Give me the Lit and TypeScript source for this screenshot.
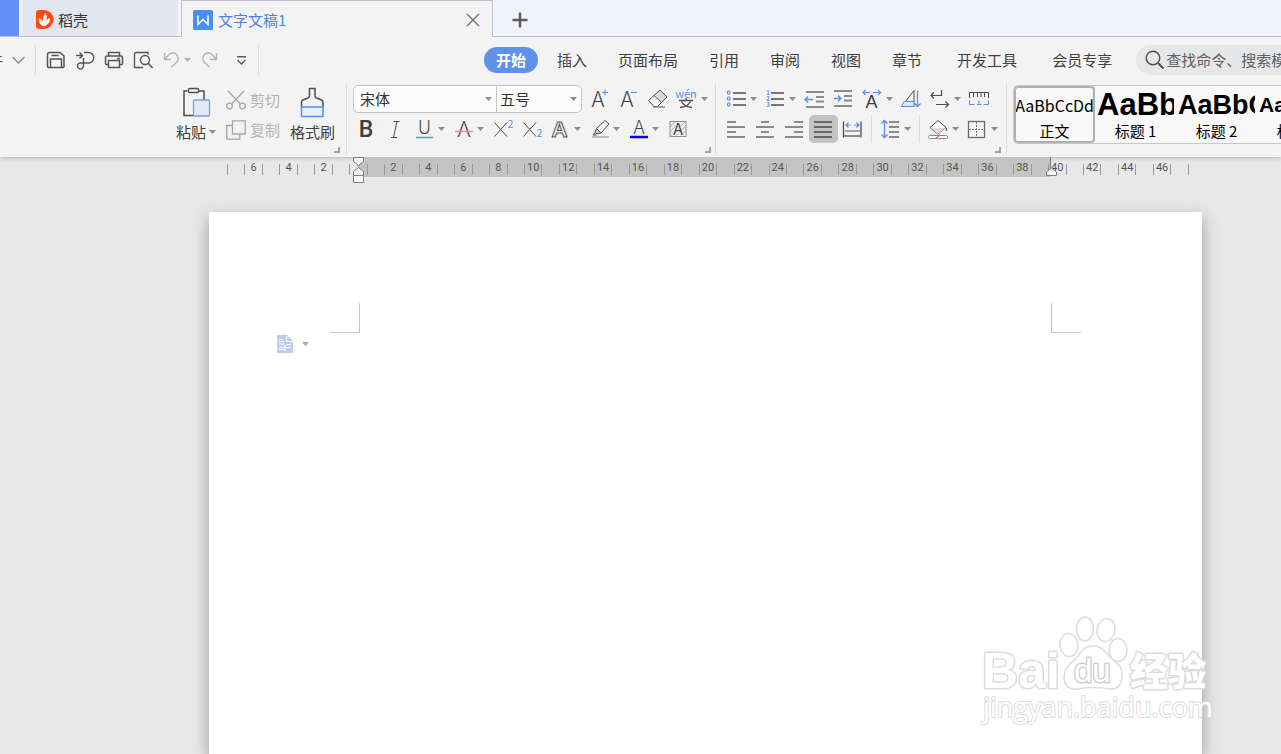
import { LitElement, html, svg, css, nothing, TemplateResult, SVGTemplateResult } from "lit";
import { customElement, state } from "lit/decorators.js";

const GREY = "#8a8a8a";
const DARK = "#4d4d4d";
const BLUE = "#5b8fe6";

const letter = (ch: string, x: number, y: number, size: number, extra = "") =>
  svg`<text class="glyph ${extra}" x=${x} y=${y} font-size=${size} text-anchor="middle">${ch}</text>`;

const hline = (x1: number, x2: number, y: number, color = GREY, w = 2) =>
  svg`<path d="M${x1} ${y}H${x2}" stroke=${color} stroke-width=${w} fill="none"/>`;

const ICONS: Record<string, SVGTemplateResult> = {
  grow: svg`${letter("A", 8, 19, 22)}<path d="M12 4.5h6M15 1.5v6" stroke=${BLUE} fill="none"/>`,
  shrink: svg`${letter("A", 8, 19, 22)}<path d="M12 4.5h6" stroke=${BLUE} fill="none"/>`,
  eraser: svg`<path d="M6.5 6.5L12 2l7 7-5.500 5.500z" fill="#dadada"/><path d="M12 2l7 7-9.500 9.500H6L.5 12.500z M6 7.500l7.500 7" fill="none" stroke=${DARK}/><path d="M5 19h12" stroke=${GREY} stroke-width="1.500"/>`,
  pinyin: svg`<text class="glyph blue" x="9" y="10" font-size="11" text-anchor="middle">wén</text><path d="M2 12.500h14M9 10v2.500M4.500 13.500c2 4 5 5.500 10.500 6M13.500 13.500c-2 4-5 5.500-10.500 6" stroke=${DARK} stroke-width="1.300" fill="none"/>`,
  bold: letter("B", 10, 19, 23, "strong"),
  italic: svg`<path d="M8.500 3.500h6M6 19.500h6M12 3.500L8.500 19.500" stroke=${DARK} fill="none"/>`,
  underline: svg`${letter("U", 10.5, 16, 19)}${hline(2, 19, 19.5, BLUE, 1.5)}`,
  strike: svg`${letter("A", 11, 19, 22)}${hline(2, 20, 13.5, "#e58c8c", 1.5)}`,
  sup: svg`<path d="M2.500 4.500L15 18.500M15 4.500L2.500 18.500" stroke=${DARK} fill="none"/><text class="glyph blue" x="18.500" y="10" font-size="10" text-anchor="middle">2</text>`,
  sub: svg`<path d="M2.500 4.500L15 18.500M15 4.500L2.500 18.500" stroke=${DARK} fill="none"/><text class="glyph blue" x="18.500" y="19" font-size="10" text-anchor="middle">2</text>`,
  effect: svg`<text x="11" y="19" class="outline-shade" font-size="22" text-anchor="middle">A</text><text x="9.500" y="19" class="outline" font-size="22" text-anchor="middle">A</text>`,
  highlight: svg`<path d="M7.500 10.500L16 2.500l4 3.500-8 9z" fill="none" stroke=${DARK}/><path d="M7.500 10.500l-1.500 4 2 1.500 4-1z M6 14.500L4 17h3.500" fill="#cfcfcf" stroke=${DARK}/>${hline(3, 20, 19, "#bcbcbc")}`,
  color: svg`${letter("A", 11, 16, 19)}${hline(2, 20, 19, "#0000ff", 2.5)}`,
  shade: svg`<rect x="3" y="3.500" width="16" height="15" fill="#f3f3f3" stroke="#909090"/><path d="M3 9l5-5.500M3 14l10-10.500M3 18.500L18 4M8 18.500L19 8M13 18.500l6-6" stroke="#a6a6a6"/><text class="glyph halo" x="11" y="17" font-size="16" text-anchor="middle">A</text>`,
  bullets: svg`${[3, 9, 15].map((y) => svg`<rect x="1.500" y=${y} width="2.500" height="3" rx="1" fill="none" stroke=${BLUE} stroke-width="1.200"/>${hline(7, 20, y + 2, DARK, 1.5)}`)}`,
  numbers: svg`${[1, 2, 3].map((n) => svg`<text class="glyph blue tiny" x="3" y=${n * 6 + 1} font-size="6" text-anchor="middle">${n}</text>${hline(6, 19, n * 6 - 1, DARK, 1.5)}`)}`,
  outdent: svg`${hline(2, 20, 4)}${hline(12, 20, 9)}${hline(12, 20, 13.5)}${hline(2, 20, 19)}<path d="M1 11.500h8M4 8.500l-3 3 3 3" stroke=${BLUE} stroke-width="1.300" fill="none"/>`,
  indent: svg`${hline(1, 19, 3)}${hline(11, 19, 8)}${hline(11, 19, 12.5)}${hline(1, 19, 18)}<path d="M1 10.500h7M5 7.500l3 3-3 3" stroke=${BLUE} stroke-width="1.300" fill="none"/>`,
  scale: svg`${letter("A", 9.5, 20, 18, "broad")}<path d="M1 4.500h7M3.500 2L1 4.500 3.500 7M11 4.500h7.500M16 2l2.500 2.500L16 7" stroke=${BLUE} stroke-width="1.200" fill="none"/>`,
  sort: svg`<path d="M.5 18.500h12.500V2.500z" fill="none" stroke=${DARK}/><path d="M3 13.500h10v5H.5z" fill="#dfe8f7" stroke=${BLUE}/><path d="M16.500 2.500v16M13.500 15.500l3 3 3-3" stroke=${BLUE} stroke-width="1.300" fill="none"/>`,
  wrap: svg`<path d="M11.500 2v5.500H1M4 4.500l-3 3 3 3M6 16.500h12.500M15.500 13.500l3 3-3 3" stroke=${DARK} stroke-width="1.200" fill="none"/>`,
  tabs: svg`<path d="M.5 10V4.500h19V10M4.500 5v4M8.500 5v4M12 5v4M15.500 5v4" stroke=${DARK} fill="none"/><path d="M.5 12.500v4h5M8 16.500h4.500M10 12.500v4M19.500 12.500v4h-5" stroke=${BLUE} fill="none"/>`,
  left: svg`${hline(1, 10, 4)}${hline(1, 19, 9)}${hline(1, 10, 14)}${hline(1, 19, 19)}`,
  center: svg`${hline(6, 14, 4)}${hline(1, 19, 9)}${hline(6, 14, 14)}${hline(1, 19, 19)}`,
  right: svg`${hline(10, 19, 4)}${hline(1, 19, 9)}${hline(10, 19, 14)}${hline(1, 19, 19)}`,
  justify: svg`${hline(1, 19, 4, "#666")}${hline(1, 19, 9, "#666")}${hline(1, 19, 14, "#666")}${hline(1, 19, 19, "#666")}`,
  spread: svg`<path d="M1.500 3.500v16M19 3.500v16" stroke=${DARK} stroke-width="1.300"/>${hline(3, 18, 13, GREY, 1.5)}${hline(2, 19, 18, GREY, 2)}<path d="M4 7h5M6.500 4.500L4 7l2.500 2.500M12 7h5M14.500 4.500L17 7l-2.500 2.500" stroke=${BLUE} stroke-width="1.200" fill="none"/>`,
  spacing: svg`${hline(9, 19, 4)}${hline(9, 19, 9)}${hline(9, 19, 14)}${hline(9, 19, 19)}<path d="M4.500 3v16M1.500 5.500l3-3 3 3M1.500 16.500l3 3 3-3" stroke=${BLUE} stroke-width="1.300" fill="none"/>`,
  fill: svg`<path d="M2 9.500L10 2.500l8 7-8.500 6.500z" fill="#fff" stroke=${DARK}/><path d="M3 10h14.500l-8 6z" fill="#dcdcdc"/><path d="M18.500 10v3" stroke=${DARK}/><rect x=".5" y="17.500" width="19" height="3" rx="1" fill="#fff" stroke=${GREY}/><path d="M8 20.500l4-4" stroke="#e06a6a" stroke-width="1.300"/>`,
  borders: svg`<rect x="1.500" y="3.500" width="16" height="16" fill="none" stroke="#6a6a6a" stroke-width="1.300"/><path d="M9.500 4v15M2 11.500h15" stroke="#777" stroke-dasharray="2 1"/>`,
};

interface Tool {
  icon: string;
  label: string;
  menu?: boolean;
  sep?: boolean;
  on?: boolean;
}

const FONT_ROW1: Tool[] = [
  { icon: "grow", label: "增大字号" },
  { icon: "shrink", label: "减小字号" },
  { icon: "eraser", label: "清除格式" },
  { icon: "pinyin", label: "拼音指南", menu: true },
];
const FONT_ROW2: Tool[] = [
  { icon: "bold", label: "加粗" },
  { icon: "italic", label: "倾斜" },
  { icon: "underline", label: "下划线", menu: true },
  { icon: "strike", label: "删除线", menu: true },
  { icon: "sup", label: "上标" },
  { icon: "sub", label: "下标" },
  { icon: "effect", label: "文字效果", menu: true },
  { icon: "highlight", label: "突出显示", menu: true },
  { icon: "color", label: "字体颜色", menu: true },
  { icon: "shade", label: "字符底纹" },
];
const PARA_ROW1: Tool[] = [
  { icon: "bullets", label: "项目符号", menu: true },
  { icon: "numbers", label: "编号", menu: true },
  { icon: "outdent", label: "减少缩进量" },
  { icon: "indent", label: "增加缩进量" },
  { icon: "scale", label: "中文版式", menu: true },
  { icon: "sort", label: "排序" },
  { icon: "wrap", label: "显示编辑标记", menu: true },
  { icon: "tabs", label: "制表位" },
];
const PARA_ROW2: Tool[] = [
  { icon: "left", label: "左对齐" },
  { icon: "center", label: "居中对齐" },
  { icon: "right", label: "右对齐" },
  { icon: "justify", label: "两端对齐", on: true },
  { icon: "spread", label: "分散对齐" },
  { icon: "spacing", label: "行距", menu: true, sep: true },
  { icon: "fill", label: "底纹颜色", menu: true, sep: true },
  { icon: "borders", label: "边框", menu: true },
];

const MENUS = ["开始", "插入", "页面布局", "引用", "审阅", "视图", "章节"];
const MENUS_WIDE = ["开发工具", "会员专享"];

const STYLES = [
  { sample: "AaBbCcDd", name: "正文", cls: "body" },
  { sample: "AaBb", name: "标题 1", cls: "h1" },
  { sample: "AaBbC", name: "标题 2", cls: "h2" },
  { sample: "AaBbCc", name: "标题 3", cls: "h3" },
];

const caret = html`<svg class="caret" width="7" height="4" viewBox="0 0 7 4" aria-hidden="true"><path d="M0 0h7L3.500 4z" fill="#8c8c8c"/></svg>`;

const picture = (w: number, h: number, body: SVGTemplateResult): TemplateResult =>
  html`<svg width=${w} height=${h} viewBox="0 0 ${w} ${h}" aria-hidden="true">${body}</svg>`;

const resets = css`
  * { box-sizing: border-box; }
  button {
    font: inherit; color: inherit; border: 0; padding: 0; margin: 0;
    background: none; display: flex; align-items: center; flex: none; cursor: default;
  }
  svg { display: block; flex: none; overflow: visible; }
`;

@customElement("tab-strip")
export class TabStrip extends LitElement {
  static styles = [resets, css`
    :host { display: flex; height: 37px; background: #f2f3f8; box-shadow: inset 0 -1px #b9c0d4; font-size: 15px; }
    .home { width: 19px; margin-right: 3px; height: 36px; background: #6390fb; }
    .tab { width: 156px; height: 36px; padding: 4px 0 0 14px; gap: 5px; background: #e2e6ef; color: #333; margin-right: 3px; }
    .active { display: flex; align-items: center; flex: none; width: 312px; padding: 2px 12px 0 11px; background: #f3f3f3; border: 1px solid #b9c0d4; border-bottom: 0; }
    .title { flex: 1; color: #4a83e4; gap: 5px; }
    .add { margin-left: 19px; padding-top: 2px; }
  `];
  render() {
    return html`
      <button class="home" aria-label="首页"></button>
      <button class="tab">${picture(17, 20, svg`
        <path d="M0 3a3 3 0 0 1 3-3h5a9.500 9.500 0 0 1 0 19H3a3 3 0 0 1-3-3z" fill="#ff4a12"/>
        <path d="M7.500 16.500C3.500 14.500 2.500 11 3 8c2.500 1 4.500 3 4.500 5.500C6.500 9 7 5.500 9.500 3c2 3 1.500 6 0 9.500 1-2.500 2.500-4 4.500-4.500 0 4-1.500 7-6.500 8.500z" fill="#fff"/>`)}稻壳</button>
      <div class="active">
        <button class="title">${picture(20, 20, svg`
          <rect width="20" height="20" rx="1.500" fill="#4a90f2"/>
          <path d="M5 5.500v9l5-5 5 5v-9" fill="none" stroke="#fff" stroke-width="1.500"/>`)}文字文稿1</button>
        <button aria-label="关闭">${picture(14, 14, svg`<path d="M1 1l12 12M13 1L1 13" stroke="#6b6b6b" stroke-width="1.300"/>`)}</button>
      </div>
      <button class="add" aria-label="新建">${picture(16, 16, svg`<path d="M8 .5v15M.5 8h15" stroke="#5c5c5c" stroke-width="2.500"/>`)}</button>
    `;
  }
}

@customElement("menu-row")
export class MenuRow extends LitElement {
  @state() private current = "开始";
  static styles = [resets, css`
    :host { display: flex; align-items: center; height: 46px; overflow: hidden; font-size: 15px; color: #404040; }
    .file { width: 3px; overflow: hidden; justify-content: flex-end; white-space: nowrap; }
    .fold { margin: 0 10px 0 9px; }
    .rule { flex: none; width: 1px; height: 30px; background: #dcdcdc; }
    .quick { display: flex; align-items: center; gap: 9px; margin: 0 11px 0 10px; }
    .history { display: flex; align-items: center; gap: 4px; margin-right: 1px; }
    .history .caret { opacity: 0.6; }
    .quick .more { margin: 0 0 0 8px; }
    nav { display: flex; align-items: center; gap: 7px; margin-left: 225px; }
    nav button { height: 26px; padding: 0 12px; border-radius: 13px; white-space: nowrap; }
    nav .wide { margin-left: 4px; }
    nav .current { background: #5e92e8; color: #fff; font-weight: 700; }
    .search { display: flex; align-items: center; flex: 1 0 240px; height: 30px; margin-left: 12px; padding-left: 9px; gap: 2px; border-radius: 15px 0 0 15px; background: #e6e7e9; }
    input { flex: 1; min-width: 0; border: 0; padding: 0; background: none; font: inherit; outline: 0; }
    input::placeholder { color: #606060; opacity: 1; }
  `];
  render() {
    const item = (name: string, wide = false) => html`<button
      class="${wide ? "wide" : ""} ${name === this.current ? "current" : ""}"
      @click=${() => (this.current = name)}>${name}</button>`;
    return html`
      <button class="file">文件</button>
      <button class="fold" aria-label="展开">${picture(13, 8, svg`<path d="M.5 1l6 6 6-6" fill="none" stroke="#8a8a8a" stroke-width="1.300"/>`)}</button>
      <span class="rule"></span>
      <div class="quick">
        <button aria-label="保存">${picture(20, 20, svg`<path d="M1.500 4.500a2 2 0 0 1 2-2H14l4 3.500v10.500a1 1 0 0 1-1 1H2.500a1 1 0 0 1-1-1z M4.500 17.500V9h11v8.500M5.500 5.500h7" fill="none" stroke="#555" stroke-width="1.500"/>`)}</button>
        <button aria-label="输出为PDF">${picture(20, 20, svg`<path d="M1 5.500h6M4.500 2.500l3 3-3 3M9 2.500h4.500a5 5 0 0 1 0 10.500H6a3 3 0 1 0 2.500 3V8" fill="none" stroke="#555" stroke-width="1.400"/>`)}</button>
        <button aria-label="打印">${picture(20, 20, svg`<path d="M4.500 6V2.500h11V6M4.500 14.500H2.500a1 1 0 0 1-1-1V7.500A1.500 1.500 0 0 1 3 6h14a1.500 1.500 0 0 1 1.500 1.500v6a1 1 0 0 1-1 1h-2M4.500 10.500h11v7h-11zM13 8.500h3" fill="none" stroke="#555" stroke-width="1.500"/>`)}</button>
        <button aria-label="打印预览">${picture(20, 20, svg`<path d="M15 4.500V2.500H3a1.500 1.500 0 0 0-1.500 1.500v13.500H10" fill="none" stroke="#555" stroke-width="1.400"/><circle cx="12" cy="10" r="4.500" fill="none" stroke="#555" stroke-width="1.400"/><path d="M15.500 13.500l4 4.500" stroke="#555" stroke-width="1.500"/>`)}</button>
        <span class="history">
          <button aria-label="撤销">${picture(18, 20, svg`<path d="M2.500 3v6.500H9M2.500 9.500l4-4.500a5.500 5.500 0 0 1 8.500 7l-5.500 5" fill="none" stroke="#b4b4b4" stroke-width="1.400"/>`)}</button>
          ${caret}
        </span>
        <button aria-label="恢复">${picture(18, 20, svg`<path d="M15.500 3v6.500H9M15.500 9.500l-4-4.500a5.500 5.500 0 0 0-8.500 7l5.500 5" fill="none" stroke="#b4b4b4" stroke-width="1.400"/>`)}</button>
        <button class="more" aria-label="自定义快速访问工具栏">${picture(11, 9, svg`<path d="M1 .8h9M1.500 4l4 4 4-4" fill="none" stroke="#5a5a5a" stroke-width="1.400"/>`)}</button>
      </div>
      <span class="rule"></span>
      <nav>${MENUS.map((m) => item(m))}${MENUS_WIDE.map((m) => item(m, true))}</nav>
      <label class="search">
        ${picture(19, 20, svg`<circle cx="8" cy="8" r="6.800" fill="none" stroke="#505050" stroke-width="1.400"/><path d="M13 13l5.500 5.500" stroke="#505050" stroke-width="2"/>`)}
        <input type="text" aria-label="查找命令" placeholder="查找命令、搜索模板" />
      </label>
    `;
  }
}

@customElement("tool-ribbon")
export class ToolRibbon extends LitElement {
  @state() private picked = 0;
  static styles = [resets, css`
    :host { display: flex; height: 74px; overflow: hidden; font-size: 15px; color: #404040; }
    .group { display: flex; flex-direction: column; flex: none; height: 71px; padding-top: 2px; border-right: 1px solid #dcdcdc; }
    .clipboard { padding: 2px 5px 0 176px; }
    .font { padding: 2px 3px 0 5px; }
    .para { padding: 2px 4px 0 6px; }
    .row { display: flex; height: 28px; }
    .row + .row { margin-top: 2px; }
    .launch { align-self: flex-end; margin: 4px 1px 0 0; }
    .tool { height: 28px; padding: 0 4px; border-radius: 5px; }
    .tool .caret { margin-left: 3px; }
    .on { background: #c3c3c3; }
    .split { width: 1px; background: #dcdcdc; margin: 0 4px; }
    .glyph { font-family: "Noto Sans CJK SC", sans-serif; font-weight: 300; fill: #404040; }
    .blue { fill: #5b8fe6; font-weight: 400; }
    .strong { font-family: Roboto, sans-serif; font-weight: 500; }
    .broad { font-family: "Liberation Sans", sans-serif; font-weight: 400; }
    .halo { font-weight: 400; paint-order: stroke; stroke: #f3f3f3; stroke-width: 2px; }
    .tiny { font-weight: 700; }
    .outline { font-family: "Liberation Sans", sans-serif; font-weight: 700; fill: #f3f3f3; stroke: #555; stroke-width: 1px; }
    .outline-shade { font-family: "Liberation Sans", sans-serif; font-weight: 700; fill: #d5d5d5; }
    .boxes { display: flex; width: 229px; margin: 0 4px 0 1px; border: 1px solid #c4c4c4; border-radius: 5px; background: #fbfbfb; overflow: hidden; }
    .field { display: grid; align-items: center; }
    .family { width: 143px; border-right: 1px solid #c4c4c4; }
    .size { flex: 1; }
    .field > * { grid-area: 1 / 1; }
    .field .caret { justify-self: end; margin-right: 4px; pointer-events: none; }
    select { appearance: none; width: 100%; height: 26px; border: 0; padding: 0 6px; background: none; font: inherit; color: #333; outline: 0; }
    .size select { padding: 0 3px; }
    .clips { display: flex; height: 58px; gap: 10px; margin-right: 6px; }
    .big { flex-direction: column; justify-content: space-between; height: 58px; padding-top: 2px; line-height: 22px; }
    .big span { display: flex; align-items: center; gap: 3px; }
    .pair button { height: 30px; gap: 4px; color: #b4b4b4; }
    .gallery { display: flex; flex: 1; min-width: 0; overflow: hidden; height: 59px; margin: 2px 0 0 6px; border: 1px solid #c8c8c8; border-right: 0; border-radius: 5px 0 0 5px; background: #f8f8f8; color: #000; }
    .style { flex-direction: column; width: 81px; height: 57px; border: 2px solid transparent; border-radius: 4px; overflow: hidden; }
    .style.picked { border-color: #b0b0b0; }
    .sample { display: flex; align-items: center; align-self: stretch; height: 33px; white-space: nowrap; overflow: hidden; }
    .name { line-height: 20px; }
    .body { font-family: "Noto Sans CJK SC", sans-serif; font-size: 16px; justify-content: center; }
    .h1, .h2, .h3 { font-family: "Liberation Sans", sans-serif; font-weight: 700; }
    .h1 { font-size: 31px; }
    .h2 { font-size: 27px; }
    .h3 { font-size: 21px; }
  `];
  private tool(t: Tool) {
    return html`${t.sep ? html`<span class="split"></span>` : nothing}<button
      class="tool ${t.on ? "on" : ""}" aria-label=${t.label}>${picture(21, 22, ICONS[t.icon])}${t.menu ? caret : nothing}</button>`;
  }
  private launcher(label: string) {
    return html`<button class="launch" aria-label=${label}>${picture(6, 6, svg`<path d="M5 0v5H0" fill="none" stroke="#a0a0a0" stroke-width="2"/>`)}</button>`;
  }
  render() {
    return html`
      <section class="group clipboard">
        <div class="clips">
          <button class="big">
            ${picture(30, 32, svg`<path d="M6.500 4H3v24.500h10M17.500 4H23v9" fill="none" stroke="#4d4d4d" stroke-width="1.500"/><rect x="7.500" y="1.500" width="10" height="4" rx="1" fill="#f3f3f3" stroke="#4d4d4d" stroke-width="1.300"/><rect x="12.500" y="13" width="16" height="16" rx="1" fill="#e2e9f6" stroke="#7ba0e0" stroke-width="1.300"/>`)}
            <span>粘贴${caret}</span>
          </button>
          <div class="pair">
            <button>${picture(20, 20, svg`<path d="M2 1l12.500 13M18 1L5.500 14" stroke="#a6a6a6" stroke-width="1.300"/><circle cx="3.500" cy="16" r="2.800" fill="none" stroke="#a6a6a6" stroke-width="1.300"/><circle cx="16.500" cy="16" r="2.800" fill="none" stroke="#a6a6a6" stroke-width="1.300"/>`)}剪切</button>
            <button>${picture(20, 20, svg`<path d="M6 5.500H.8v13.700h13V14M6.500.8h12.700v13.200H6.500z" fill="none" stroke="#a6a6a6" stroke-width="1.300"/>`)}复制</button>
          </div>
          <button class="big">
            ${picture(24, 32, svg`<path d="M.5 20v-5c0-1 .5-1.500 1.500-2l5-2c1-.5 1.500-1 1.500-2V1.500h5.500V9c0 1 .5 1.500 1.500 2l5 2c1 .5 1.500 1 1.500 2v5" fill="none" stroke="#4d4d4d" stroke-width="1.500"/><path d="M.5 20h21.500v9.500H.5z" fill="#eaf0fa" stroke="#5b8fe6" stroke-width="1.500"/>`)}
            <span>格式刷</span>
          </button>
        </div>
        ${this.launcher("剪贴板")}
      </section>
      <section class="group font">
        <div class="row">
          <div class="boxes">
            <div class="field family"><select aria-label="字体"><option>宋体</option><option>黑体</option></select>${caret}</div>
            <div class="field size"><select aria-label="字号"><option>五号</option><option>四号</option></select>${caret}</div>
          </div>
          ${FONT_ROW1.map((t) => this.tool(t))}
        </div>
        <div class="row">${FONT_ROW2.map((t) => this.tool(t))}</div>
        ${this.launcher("字体设置")}
      </section>
      <section class="group para">
        <div class="row">${PARA_ROW1.map((t) => this.tool(t))}</div>
        <div class="row">${PARA_ROW2.map((t) => this.tool(t))}</div>
        ${this.launcher("段落设置")}
      </section>
      <div class="gallery">
        ${STYLES.map((s, i) => html`<button class="style ${i === this.picked ? "picked" : ""}" @click=${() => (this.picked = i)}>
          <span class="sample ${s.cls}">${s.sample}</span><span class="name">${s.name}</span></button>`)}
      </div>
    `;
  }
}

@customElement("doc-ruler")
export class DocRuler extends LitElement {
  static styles = [resets, css`
    :host { display: grid; position: relative; height: 20px; font: 11px Roboto, sans-serif; color: #555; }
    .band, .scale { grid-area: 1 / 1; }
    .band { margin: 0 151px 0 150px; background: #c4c4c4; }
    .scale { display: flex; height: 11px; margin: 7px 13px 0 18px; border-right: 1px solid #999; }
    .cell { flex: 1 1 0; width: 0; display: flex; justify-content: center; align-items: center; border-left: 1px solid #999; line-height: 11px; padding-bottom: 4px; }
    .start { position: absolute; left: 144px; top: 0; }
    .end { position: absolute; right: 144px; top: 0; }
  `];
  render() {
    const cells = Array.from({ length: 55 }, (_, i) => i - 7);
    return html`
      <div class="band"></div>
      <div class="scale">${cells.map((n) => html`<span class="cell">${n % 2 === 0 && n !== 0 ? Math.abs(n) : nothing}</span>`)}</div>
      <span class="start">${picture(12, 26, svg`<path d="M.5.500h10v4l-4 3-.5 1.500h-1L4.500 7.500l-4-3zM.5 25.500v-11l5-4 5 4v11zM.5 18.500h10" fill="#f5f5f5" stroke="#7d7d7d"/>`)}</span>
      <span class="end">${picture(12, 19, svg`<path d="M4.500 0v11" stroke="#777"/><path d="M.5 18.500v-3.500l5-4 5 4v3.500z" fill="#f8f8f8" stroke="#7d7d7d"/>`)}</span>
    `;
  }
}

@customElement("site-watermark")
export class SiteWatermark extends LitElement {
  static styles = [resets, css`
    :host { display: block; }
    text { font-family: "Liberation Sans", sans-serif; font-weight: 700; fill: #fff; stroke: #dcdcdc; stroke-width: 3px; paint-order: stroke; stroke-linejoin: round; }
    .cjk { font-family: "Noto Sans CJK SC", sans-serif; font-weight: 900; }
    .url { font-family: "Open Sans", sans-serif; font-weight: 400; stroke-width: 2px; }
    .paw { fill: #fff; stroke: #dcdcdc; stroke-width: 1.500px; }
    .du { font-weight: 400; stroke: #d0d0d0; stroke-width: 3px; }
  `];
  render() {
    return picture(234, 120, svg`
      <text x="1" y="74" font-size="50">Bai</text>
      <ellipse class="paw" cx="88" cy="31" rx="9" ry="11.500" transform="rotate(-8 88 31)"/>
      <ellipse class="paw" cx="104" cy="15" rx="8.500" ry="12"/>
      <ellipse class="paw" cx="125" cy="16" rx="9" ry="11.500" transform="rotate(12 125 16)"/>
      <ellipse class="paw" cx="137" cy="36" rx="9" ry="11.500"/>
      <path class="paw" d="M112 32C120 32 123 36 128 42C133 48 142 51 141 61C141 70 137 76 129 75C118 73 108 73 96 75C88 76 83 71 83 63C83 53 91 49 97 42C101 36 104 32 112 32Z"/>
      <text class="du" x="93" y="68" font-size="33">du</text>
      <text class="cjk" x="149" y="71" font-size="38">经验</text>
      <text class="url" x="2" y="103" font-size="27">jingyan.baidu.com</text>
    `);
  }
}

@customElement("app-root")
export class AppRoot extends LitElement {
  static styles = [resets, css`
    :host { display: flex; flex-direction: column; min-height: 100vh; position: relative; overflow: hidden; background: #e8e8e8; font-family: "Noto Sans CJK SC", sans-serif; line-height: 22px; }
    header { background: #f3f3f3; box-shadow: 0 1px 4px rgba(0, 0, 0, 0.22); }
    main { flex: 1; display: flex; flex-direction: column; padding: 0 79px 0 209px; }
    .page { flex: 1; margin-top: 35px; padding-top: 91px; background: #fff; box-shadow: 0 6px 16px rgba(0, 0, 0, 0.34); }
    .marks { display: flex; justify-content: space-between; padding: 0 121px; }
    .mark { width: 30px; height: 30px; border-bottom: 1px solid #c4c4c4; }
    .tl { border-right: 1px solid #c4c4c4; }
    .tr { border-left: 1px solid #c4c4c4; }
    .paste { margin: 2px 0 0 68px; gap: 8px; }
    .paste .caret { opacity: 0.75; }
    .watermark { position: absolute; right: 66px; bottom: 20px; pointer-events: none; }
  `];
  render() {
    return html`
      <header><tab-strip></tab-strip><menu-row></menu-row><tool-ribbon></tool-ribbon></header>
      <main>
        <doc-ruler></doc-ruler>
        <div class="page">
          <div class="marks"><span class="mark tl"></span><span class="mark tr"></span></div>
          <button class="paste" aria-label="页面选项">
            ${picture(17, 18, svg`<path d="M0 0h10l6 6v12H0z" fill="#b9cfec"/><path d="M9.500 1v5.500H16M2 4.500h4M2 6.500h5M2 9h5M2 12.500h12M2 14.500h5M8 10v6M9 9.500h5" stroke="#fff" fill="none" stroke-width="1.200"/>`)}
            ${caret}
          </button>
        </div>
      </main>
      <site-watermark class="watermark"></site-watermark>
    `;
  }
}
